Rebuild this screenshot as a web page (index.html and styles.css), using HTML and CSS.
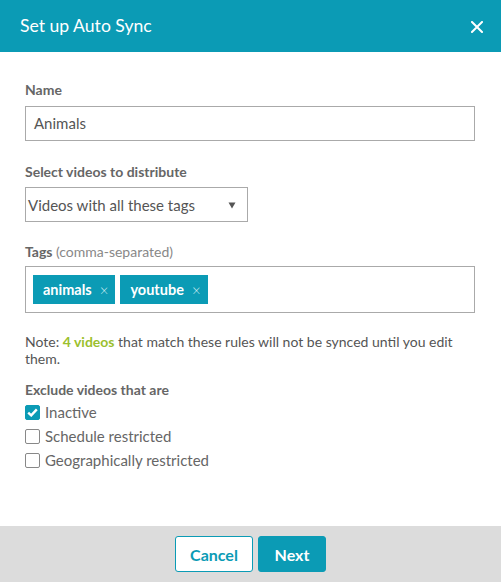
FILE: index.html
```html
<!DOCTYPE html>
<html>
<head>
<meta charset="utf-8">
<link rel="stylesheet" href="styles.css">
</head>
<body>
<div class="dialog">
  <header class="header">
    <h1 class="title">Set up Auto Sync</h1>
    <button class="close" aria-label="Close">
      <svg width="12" height="12" viewBox="0 0 12 12"><path d="M1 1L11 11M11 1L1 11" stroke="#fff" stroke-width="2" stroke-linecap="square"/></svg>
    </button>
  </header>
  <main class="content">
    <div class="label label-name">Name</div>
    <div class="input">Animals</div>

    <div class="label label-select">Select videos to distribute</div>
    <div class="select">
      <span>Videos with all these tags</span>
      <svg width="8" height="7" viewBox="0 0 8 7"><polygon points="0.5,0.5 7.5,0.5 4,6.5" fill="#555"/></svg>
    </div>

    <div class="label label-tags">Tags <span class="hint">(comma-separated)</span></div>
    <div class="tagbox">
      <span class="tag">animals <span class="tag-x">×</span></span>
      <span class="tag">youtube <span class="tag-x">×</span></span>
    </div>

    <p class="note">Note: <b class="count">4 videos</b> that match these rules will not be synced until you edit them.</p>

    <div class="label label-exclude">Exclude videos that are</div>
    <div class="checks">
      <div class="check">
        <span class="box checked"><svg width="11" height="9" viewBox="0 0 11 9"><path d="M1.2 4.6L4.2 7.4L9.8 1.4" stroke="#fff" stroke-width="2.4" fill="none"/></svg></span>
        <span>Inactive</span>
      </div>
      <div class="check"><span class="box"></span><span>Schedule restricted</span></div>
      <div class="check"><span class="box"></span><span>Geographically restricted</span></div>
    </div>
  </main>
  <footer class="footer">
    <button class="btn btn-cancel">Cancel</button>
    <button class="btn btn-next">Next</button>
  </footer>
</div>
</body>
</html>
```
FILE: styles.css
```css
html, body {
  margin: 0;
  padding: 0;
  background: #fff;
}
body {
  font-family: Lato, "Open Sans", sans-serif;
  color: #555;
}
.dialog {
  display: flex;
  flex-direction: column;
  width: 501px;
  height: 582px;
}
.header {
  height: 52px;
  background: #0b9bb5;
  display: flex;
  align-items: center;
  justify-content: space-between;
  padding: 0 18px 0 20px;
  box-sizing: border-box;
  flex: none;
}
.title {
  margin: 0;
  font-size: 17.6px;
  font-weight: 400;
  color: #fff;
  line-height: 22px;
}
.close {
  background: none;
  border: 0;
  padding: 0;
  width: 12px;
  height: 12px;
  display: flex;
  margin-top: 1px;
}
.content {
  flex: 1;
  padding: 29px 26px 0 25px;
  box-sizing: border-box;
}
.label {
  font-size: 14px;
  line-height: 17px;
  font-weight: 700;
  color: #666;
}
.label-name { margin-bottom: 8px; }
.label-select { margin-top: 22px; margin-bottom: 7px; }
.label-tags { margin-top: 21px; margin-bottom: 6px; }
.label-exclude { margin-top: 14px; margin-bottom: 2px; }
.hint {
  font-weight: 400;
  color: #888;
}
.input {
  height: 35px;
  box-sizing: border-box;
  border: 1px solid #aaa;
  padding: 0 8px;
  font-size: 15px;
  line-height: 33px;
  color: #555;
}
.select {
  width: 223px;
  height: 35px;
  box-sizing: border-box;
  border: 1px solid #aaa;
  padding: 0 11px 0 2px;
  display: flex;
  align-items: center;
  justify-content: space-between;
  font-size: 15px;
  color: #555;
}
.select svg { margin-top: 1px; }
.tagbox {
  height: 47px;
  box-sizing: border-box;
  border: 1px solid #aaa;
  padding: 8px 7px;
  display: flex;
  gap: 5px;
}
.tag {
  height: 29px;
  background: #0b9bb5;
  color: #fff;
  font-size: 14.5px;
  font-weight: 700;
  display: flex;
  align-items: center;
  padding: 0 7px 0 10px;
  box-sizing: border-box;
}
.tag-x {
  font-weight: 300;
  font-size: 15px;
  color: #d8eff3;
  margin-left: 8px;
}
.note {
  margin: 20px 0 0;
  font-size: 14px;
  line-height: 17px;
  color: #555;
}
.count {
  color: #9bbf2e;
  font-weight: 700;
}
.checks {
  display: flex;
  flex-direction: column;
}
.check {
  height: 24px;
  display: flex;
  align-items: center;
  gap: 5px;
  font-size: 15px;
  color: #666;
}
.box {
  width: 15px;
  height: 15px;
  box-sizing: border-box;
  border: 1px solid #888;
  border-radius: 2px;
  display: flex;
  align-items: center;
  justify-content: center;
  background: #fff;
}
.box.checked {
  background: #0b9bb5;
  border-color: #0b9bb5;
}
.footer {
  height: 56px;
  flex: none;
  background: #dcdcdc;
  display: flex;
  justify-content: center;
  align-items: flex-start;
  padding-top: 10px;
  box-sizing: border-box;
  gap: 5px;
}
.btn {
  height: 36px;
  border-radius: 3px;
  font-family: Lato, "Open Sans", sans-serif;
  font-size: 16px;
  font-weight: 700;
  box-sizing: border-box;
  padding: 0;
  cursor: pointer;
}
.btn-cancel {
  width: 78px;
  background: #fff;
  color: #0b9bb5;
  border: 1px solid #0b9bb5;
}
.btn-next {
  width: 68px;
  background: #0b9bb5;
  color: #fff;
  border: 1px solid #0b9bb5;
}
```
